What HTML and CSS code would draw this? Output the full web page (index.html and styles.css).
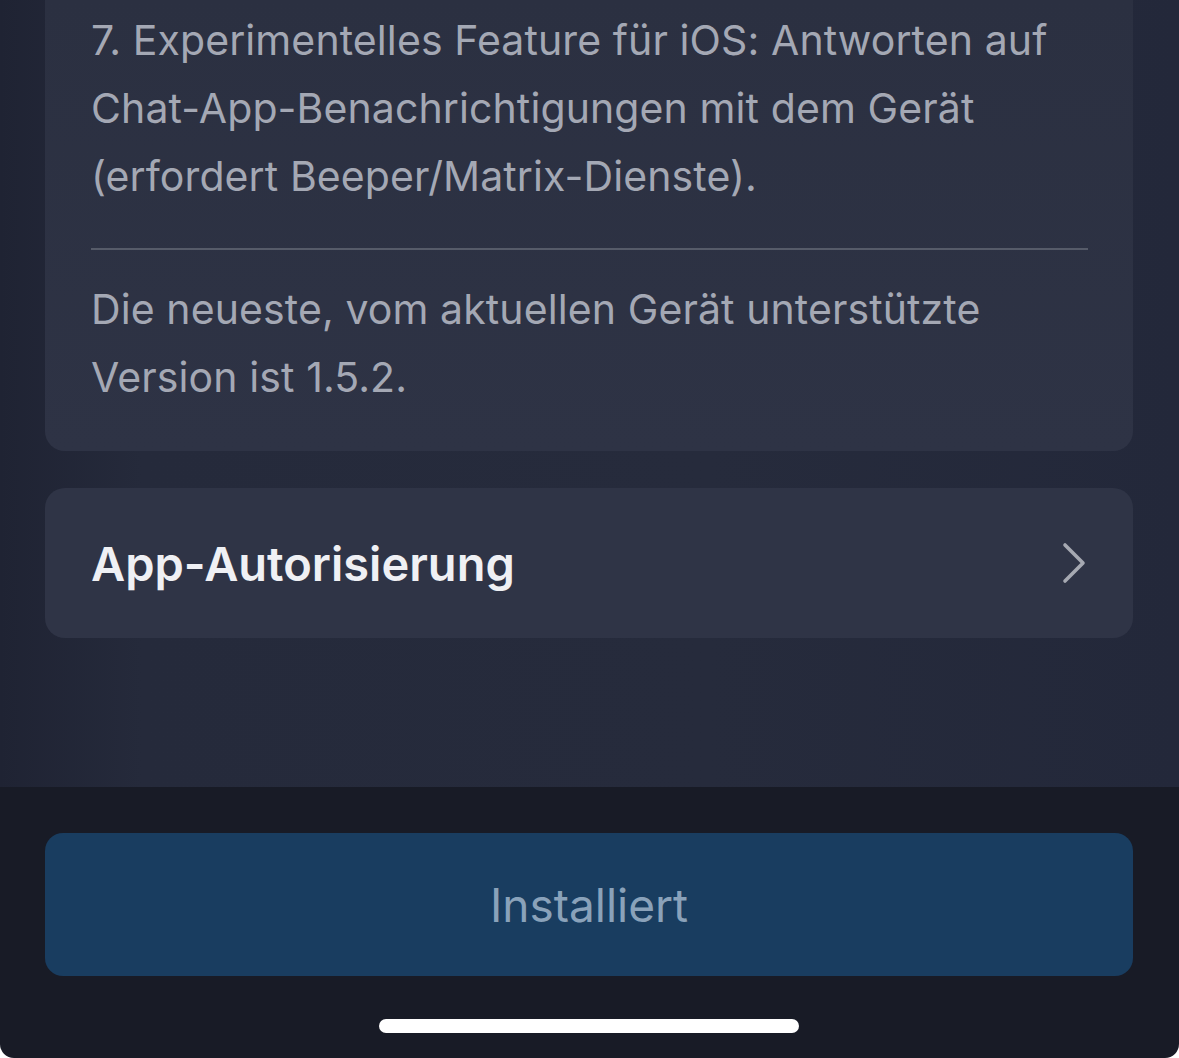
FILE: index.html
```html
<!DOCTYPE html>
<html lang="de">
<head>
    <meta charset="UTF-8">
    <meta name="viewport" content="width=device-width, initial-scale=1.0">
    <title>App-Details</title>
    <link rel="stylesheet" href="styles.css">
</head>
<body>
    <div class="screen">
        <div class="content">
            <div class="card notes">
                <p>7. Experimentelles Feature für iOS: Antworten auf Chat-App-Benachrichtigungen mit dem Gerät (erfordert Beeper/Matrix-Dienste).</p>
                <hr class="divider">
                <p class="latest">Die neueste, vom aktuellen Gerät unterstützte Version ist 1.5.2.</p>
            </div>

            <div class="card row">
                <span class="row-title">App-Autorisierung</span>
                <svg class="chevron" width="28" height="44" viewBox="0 0 28 44">
                    <polyline points="6,4 24,22 6,40" fill="none" stroke="#a6a9b2" stroke-width="3.6" stroke-linecap="round" stroke-linejoin="round"/>
                </svg>
            </div>
        </div>

        <div class="bottom-bar">
            <button class="install-btn" disabled>Installiert</button>
            <div class="home-indicator"></div>
        </div>
    </div>
</body>
</html>
```

FILE: styles.css
```css
body {
    margin: 0;
    background: #ffffff;
    font-family: Inter, "Noto Sans", Roboto, sans-serif;
}
.screen {
    width: 1179px;
    height: 1058px;
    display: flex;
    flex-direction: column;
    overflow: hidden;
    border-radius: 0 0 14px 14px;
    background: #181b26;
}
.content {
    flex: 1;
    padding: 0 46px 0 45px;
    background: linear-gradient(90deg, #1f2333 0%, #252a3b 12%, #262b3c 60%, #23283a 100%);
}
.card {
    background: #2d3244;
    border-radius: 20px;
}
.notes {
    padding: 6px 45px 40px 46px;
    border-radius: 0 0 20px 20px;
    background: linear-gradient(180deg, #2b3041 0%, #2e3345 100%);
}
.notes p {
    margin: 0;
    font-size: 41px;
    letter-spacing: 0.1px;
    line-height: 68px;
    color: #a4a8b4;
}
.divider {
    border: none;
    height: 2px;
    background: #565b69;
    margin: 38px 0 25px;
}
.row {
    margin-top: 37px;
    height: 150px;
    display: flex;
    align-items: center;
    justify-content: space-between;
    padding: 0 46px 0 46px;
    background: #2f3446;
}
.row-title {
    font-size: 47px;
    font-weight: 600;
    color: #eff0f4;
}
.chevron {
    display: block;
}
.bottom-bar {
    height: 271px;
    padding: 46px 46px 0 45px;
    box-sizing: border-box;
    display: flex;
    flex-direction: column;
    align-items: center;
}
.install-btn {
    width: 100%;
    height: 143px;
    border: none;
    border-radius: 18px;
    background: #193d60;
    color: #8aa2ba;
    font-family: inherit;
    font-size: 46px;
}
.home-indicator {
    width: 420px;
    height: 14px;
    margin-top: 43px;
    border-radius: 7px;
    background: #ffffff;
}
```
